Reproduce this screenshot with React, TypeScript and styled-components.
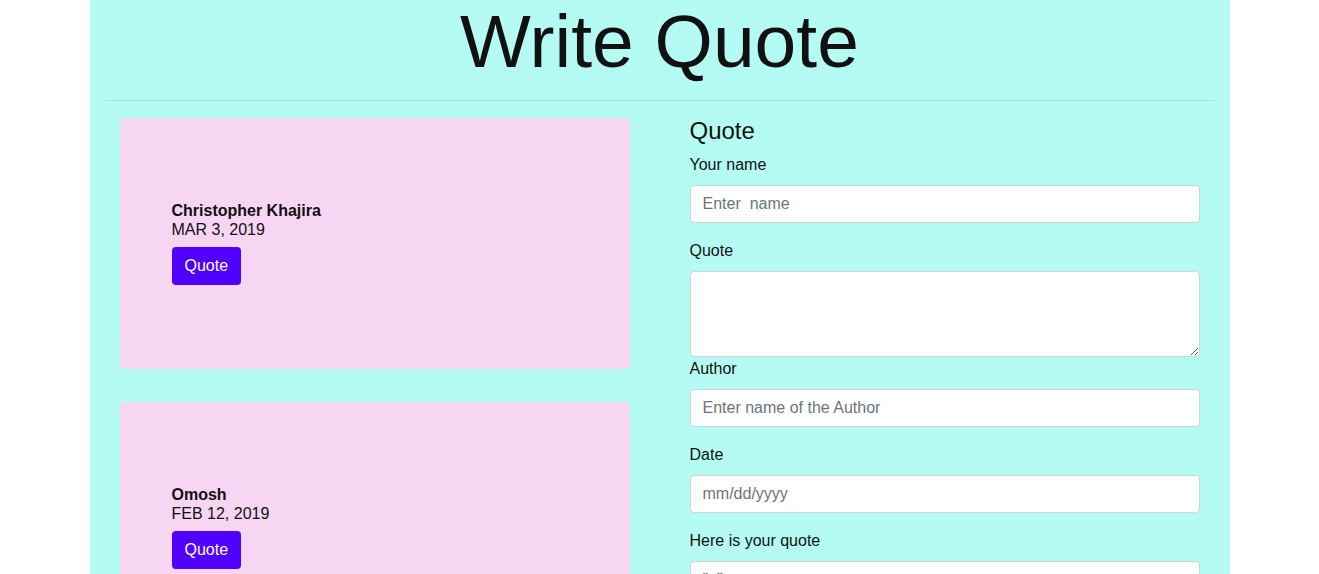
import React from "react";
import styled, { createGlobalStyle } from "styled-components";

const GlobalStyle = createGlobalStyle`
  * { box-sizing: border-box; }
  body {
    margin: 0;
    background: #ffffff;
    font-family: "Liberation Sans", Arial, sans-serif;
    font-size: 16px;
    line-height: 1.5;
    color: #212529;
  }
`;

const Container = styled.div`
  width: 1140px;
  margin: 0 auto;
  padding: 0 15px;
  background: #b4fcf3;
  min-height: 574px;
`;

const Title = styled.h1`
  margin: 0;
  height: 100px;
  font-size: 75px;
  font-weight: 400;
  line-height: 82px;
  text-align: center;
  color: #111;
`;

const Rule = styled.hr`
  margin: 0 0 16px;
  border: 0;
  border-top: 1px solid rgba(0, 0, 0, 0.1);
`;

const Row = styled.div`
  display: grid;
  grid-template-columns: 510px 510px;
  column-gap: 60px;
  padding: 0 14px 0 15px;
  align-items: start;
`;

const CardList = styled.div`
  display: flex;
  flex-direction: column;
  gap: 33px;
  padding-top: 1px;
`;

const Card = styled.div`
  height: 251px;
  background: #f7d6f4;
  border-radius: 5px;
  padding-left: 52px;
  display: flex;
  flex-direction: column;
  justify-content: center;
`;

const Name = styled.div`
  font-weight: 700;
  line-height: 19px;
  color: #111;
`;

const DateText = styled.div`
  line-height: 19px;
  color: #111;
`;

const QuoteButton = styled.button`
  align-self: flex-start;
  margin-top: 8px;
  margin-bottom: 1px;
  height: 38px;
  padding: 0 13px;
  border: none;
  border-radius: 4px;
  background: #5000ff;
  color: #fff;
  font-family: "Liberation Sans", Arial, sans-serif;
  font-size: 16px;
`;

const Form = styled.form`
  display: flex;
  flex-direction: column;
`;

const FormTitle = styled.h4`
  margin: 0 0 7px;
  font-size: 24px;
  font-weight: 400;
  line-height: 28.8px;
  color: #111;
`;

const Group = styled.div<{ $tight?: boolean }>`
  display: flex;
  flex-direction: column;
  margin-bottom: ${(p) => (p.$tight ? "0" : "16px")};
`;

const Label = styled.label`
  line-height: 24px;
  margin-bottom: 8px;
  color: #111;
`;

const fieldCss = `
  width: 100%;
  border: 1px solid #ced4da;
  border-radius: 4px;
  background: #fff;
  font-family: "Liberation Sans", Arial, sans-serif;
  font-size: 16px;
  color: #495057;
  padding: 6px 12px;
  outline: none;
  &::placeholder { color: #6c757d; }
`;

const Input = styled.input`
  ${fieldCss}
  height: 38px;
`;

const TextArea = styled.textarea`
  ${fieldCss}
  height: 86px;
  display: block;
  resize: vertical;
`;

const cards = [
  { name: "Christopher Khajira", date: "MAR 3, 2019" },
  { name: "Omosh", date: "FEB 12, 2019" },
];

export default function App() {
  return (
    <>
      <GlobalStyle />
      <Container>
        <Title>Write Quote</Title>
        <Rule />
        <Row>
          <CardList>
            {cards.map((c) => (
              <Card key={c.name}>
                <Name>{c.name}</Name>
                <DateText>{c.date}</DateText>
                <QuoteButton type="button">Quote</QuoteButton>
              </Card>
            ))}
          </CardList>
          <Form onSubmit={(e) => e.preventDefault()}>
            <FormTitle>Quote</FormTitle>
            <Group>
              <Label>Your name</Label>
              <Input placeholder="Enter  name" />
            </Group>
            <Group $tight>
              <Label>Quote</Label>
              <TextArea />
            </Group>
            <Group>
              <Label>Author</Label>
              <Input placeholder="Enter name of the Author" />
            </Group>
            <Group>
              <Label>Date</Label>
              <Input placeholder="mm/dd/yyyy" />
            </Group>
            <Group>
              <Label>Here is your quote</Label>
              <Input readOnly value={'"  "'} />
            </Group>
          </Form>
        </Row>
      </Container>
    </>
  );
}
